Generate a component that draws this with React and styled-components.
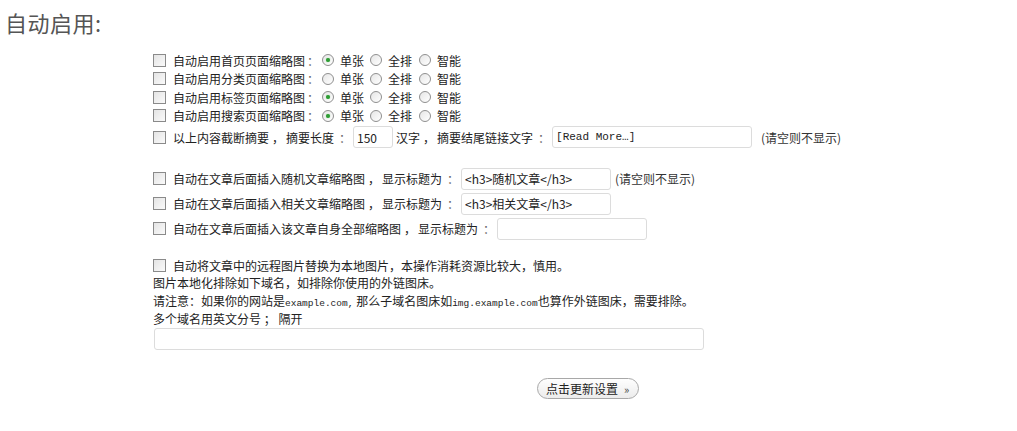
import React from 'react';
import styled, { createGlobalStyle } from 'styled-components';

const Global = createGlobalStyle`
  body {
    margin: 0;
    background: #fff;
    font-family: "Noto Sans CJK SC", "DejaVu Sans", sans-serif;
    font-size: 12px;
    color: #222;
  }
`

const Page = styled.div`
  width: 1017px;
  height: 431px;
  overflow: hidden;
`
const Title = styled.h2`
  margin: 0;
  padding: 9px 0 0 5px;
  font-size: 22px;
  line-height: 26px;
  font-weight: normal;
  letter-spacing: 0.5px;
  color: #555;
`
const Form = styled.div`
  padding-left: 153px;
  margin-top: 16px;
`
const Group = styled.div`
  display: flex;
  flex-direction: column;
  margin-top: ${p => p.gap || 0}px;
`
const Row = styled.div`
  display: flex;
  align-items: center;
  height: ${p => p.h || 18.5}px;
  white-space: nowrap;
`
const Check = styled.span`
  display: inline-block;
  box-sizing: border-box;
  width: 13px;
  height: 13px;
  border: 1px solid #8a8a8a;
  background: linear-gradient(135deg, #e4e4e4, #fafafa);
  margin-right: 7px;
  flex-shrink: 0;
`
const Radio = styled.span`
  display: inline-block;
  position: relative;
  box-sizing: border-box;
  width: 12px;
  height: 12px;
  border-radius: 50%;
  border: 1px solid #8f8f8f;
  background: linear-gradient(135deg, #e6e6e6, #fff);
  margin: 0 6px 0 ${p => p.ml ?? 6}px;
  flex-shrink: 0;
  &::after {
    content: '';
    display: ${p => (p.on ? 'block' : 'none')};
    position: absolute;
    left: 3px;
    top: 3px;
    width: 4px;
    height: 4px;
    border-radius: 50%;
    background: #2f9b36;
    box-shadow: 0 0 1px #6c6;
  }
`
const Colon = styled.span`
  display: inline-block;
  width: 12px;
  text-align: center;
  color: #666;
  margin: 0 ${p => p.r ?? 2}px 0 ${p => p.l ?? 5}px;
`
const Comma = styled.span`
  display: inline-block;
  width: 12px;
  margin: 0 2px 0 3px;
`
const Field = styled.input`
  box-sizing: border-box;
  width: ${p => p.w}px;
  height: ${p => p.h || 22}px;
  border: 1px solid #dcdcdc;
  border-radius: 3px;
  background: #fff;
  padding: 0 3px;
  margin: 0 ${p => p.mr ?? 3}px 0 ${p => p.ml || 0}px;
  font-family: ${p => (p.mono ? '"Liberation Mono", "Noto Sans CJK SC", monospace' : '"Noto Sans CJK SC", sans-serif')};
  font-size: ${p => (p.mono ? 11 : 12)}px;
  color: #222;
  outline: none;
`
const Note = styled.span`
  color: #333;
  margin-left: ${p => p.ml ?? 6}px;
`
const Line = styled.div`
  height: 18px;
  line-height: 18px;
  white-space: nowrap;
`
const Mono = styled.span`
  font-family: "Liberation Mono", monospace;
  font-size: 9.5px;
`
const Actions = styled.div`
  margin: 28px 0 0 384px;
`
const Button = styled.button`
  height: 21px;
  padding: 0 9px 0 8px;
  border: 1px solid #a8a8a8;
  border-radius: 11px;
  background: linear-gradient(#fefefe, #ececec);
  font-family: "Noto Sans CJK SC", sans-serif;
  font-size: 12px;
  color: #222;
  line-height: 19px;
  span {
    font-size: 11px;
    margin-left: 6px;
    color: #444;
  }
`

const pages = [
  ['首页', 0],
  ['分类', -1],
  ['标签', 0],
  ['搜索', 0],
]

export default function App() {
  return (
    <Page>
      <Global />
      <Title>自动启用:</Title>
      <Form>
        <Group>
          {pages.map(([name, sel]) => (
            <Row key={name}>
              <Check />
              自动启用{name}页面缩略图
              <Colon l={2} r={3}>：</Colon>
              <Radio ml={0} on={sel === 0} />单张
              <Radio on={sel === 1} />全排
              <Radio ml={7} on={sel === 2} />智能
            </Row>
          ))}
          <Row h={24}>
            <Check />
            以上内容截断摘要<Comma>，</Comma>摘要长度<Colon>：</Colon>
            <Field w={40} defaultValue="150" />
            汉字<Comma>，</Comma>摘要结尾链接文字<Colon>：</Colon>
            <Field w={200} mono defaultValue="[Read More…]" />
            <Note>(请空则不显示)</Note>
          </Row>
        </Group>
        <Group gap={17}>
          <Row h={25}>
            <Check />
            自动在文章后面插入随机文章缩略图<Comma>，</Comma>显示标题为<Colon>：</Colon>
            <Field w={150} defaultValue="<h3>随机文章</h3>" />
            <Note ml={1}>(请空则不显示)</Note>
          </Row>
          <Row h={25}>
            <Check />
            自动在文章后面插入相关文章缩略图<Comma>，</Comma>显示标题为<Colon>：</Colon>
            <Field w={150} defaultValue="<h3>相关文章</h3>" />
          </Row>
          <Row h={25}>
            <Check />
            自动在文章后面插入该文章自身全部缩略图<Comma>，</Comma>显示标题为<Colon>：</Colon>
            <Field w={150} defaultValue="" />
          </Row>
        </Group>
        <Group gap={15}>
          <Row h={18}>
            <Check />
            自动将文章中的远程图片替换为本地图片，本操作消耗资源比较大，慎用。
          </Row>
          <Line>图片本地化排除如下域名，如排除你使用的外链图床。</Line>
          <Line>
            请注意：如果你的网站是<Mono>example.com,</Mono> 那么子域名图床如<Mono>img.example.com</Mono>也算作外链图床，需要排除。
          </Line>
          <Line>多个域名用英文分号 ； 隔开</Line>
          <Field w={550} ml={1} defaultValue="" />
        </Group>
        <Actions>
          <Button>点击更新设置<span>»</span></Button>
        </Actions>
      </Form>
    </Page>
  );
}
